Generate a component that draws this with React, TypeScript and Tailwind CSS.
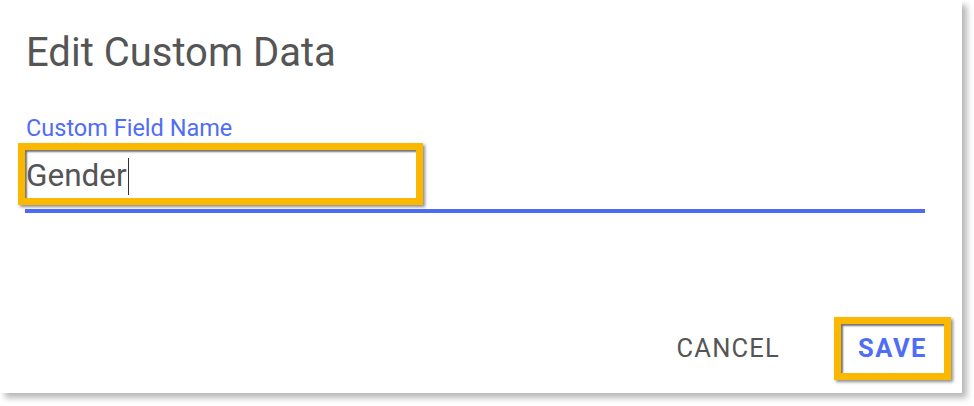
import React from "react";

export default function App() {
  return (
    <div className="w-[974px] h-[406px] bg-white overflow-hidden" style={{ fontFamily: "Roboto, 'Liberation Sans', sans-serif" }}>
      <div className="w-[962px] h-[393px] bg-white shadow-[5px_5px_6px_rgba(0,0,0,0.28)] flex flex-col">
        <div className="pt-[33px] pl-[26px] text-[40px] leading-[40px] text-[#555555]">Edit Custom Data</div>
        <div className="mt-[44px] pl-[26px] text-[23.5px] leading-[23px] text-[#4f6df5]">Custom Field Name</div>
        <div className="mt-[3px] ml-[18px] w-[405px] h-[62px] border-[7px] border-[#fbb800] shadow-[inset_2px_2px_2px_rgba(0,0,0,0.55),2px_2px_3px_rgba(0,0,0,0.45)] flex items-center pl-[1px]">
          <span className="mt-[4px] text-[31.5px] leading-[48px] text-[#555555]">Gender</span>
          <span className="mt-[4px] ml-[1px] w-[1px] h-[37px] bg-[#333333]" />
        </div>
        <div className="mt-[4px] ml-[25px] w-[900px] h-[4px] bg-[#4d6bf2]" />
        <div className="flex-1" />
        <div className="flex items-center justify-end mb-[13px] mr-[11px]">
          <span className="text-[25.5px] leading-[25px] tracking-[1.2px] text-[#555555]">CANCEL</span>
          <div className="ml-[54px] w-[117px] h-[63px] border-[7px] border-[#fbb800] shadow-[inset_2px_2px_2px_rgba(0,0,0,0.55),2px_2px_3px_rgba(0,0,0,0.45)] flex items-center justify-center">
            <span className="text-[25.5px] leading-[25px] font-bold tracking-[1.5px] text-[#4f6df5]">SAVE</span>
          </div>
        </div>
      </div>
    </div>
  );
}
